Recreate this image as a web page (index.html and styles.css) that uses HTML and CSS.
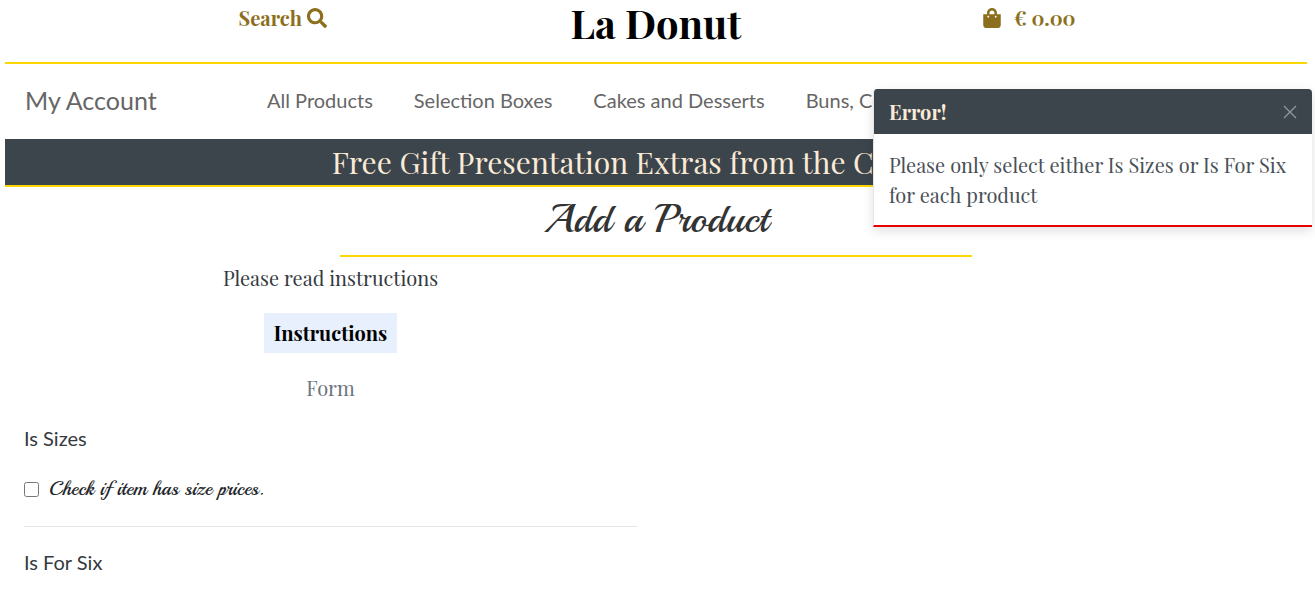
FILE: index.html
```html
<!DOCTYPE html>
<html lang="en">
<head>
<meta charset="utf-8">
<title>La Donut</title>
<link rel="stylesheet" href="styles.css">
</head>
<body>
<header class="topbar">
  <a class="top-link" href="#">Search
    <svg class="icon-search" viewBox="0 0 512 512" aria-hidden="true"><path fill="currentColor" d="M505 442.700 405.300 343c-4.500-4.500-10.600-7-17-7H372c27.600-35.300 44-79.700 44-128C416 93.100 322.900 0 208 0S0 93.100 0 208s93.100 208 208 208c48.300 0 92.700-16.400 128-44v16.300c0 6.400 2.500 12.500 7 17l99.700 99.700c9.400 9.400 24.600 9.400 33.900 0l28.300-28.300c9.400-9.400 9.400-24.600.1-34zM208 336c-70.700 0-128-57.200-128-128 0-70.700 57.200-128 128-128 70.700 0 128 57.200 128 128 0 70.700-57.200 128-128 128z"/></svg></a>
  <a class="logo" href="#">La Donut</a>
  <a class="top-link" href="#"><svg class="icon-bag" viewBox="0 0 448 512" aria-hidden="true"><path fill="currentColor" d="M352 160v-32C352 57.400 294.600 0 224 0S96 57.400 96 128v32H0v272c0 44.200 35.800 80 80 80h288c44.200 0 80-35.800 80-80V160h-96zm-192-32c0-35.300 28.700-64 64-64s64 28.700 64 64v32H160v-32zm160 120c-13.300 0-24-10.700-24-24s10.700-24 24-24 24 10.700 24 24-10.700 24-24 24zm-192 0c-13.300 0-24-10.700-24-24s10.700-24 24-24 24 10.700 24 24-10.700 24-24 24z"/></svg>€ 0.00</a>
</header>
<nav class="nav">
  <a class="account" href="#">My Account</a>
  <div class="nav-links">
    <a href="#">All Products</a>
    <a href="#">Selection Boxes</a>
    <a href="#">Cakes and Desserts</a>
    <a href="#">Buns, Cookies</a>
  </div>
</nav>
<div class="banner">Free Gift Presentation Extras from the Collection</div>
<main>
  <h1 class="title">Add a Product</h1>
  <hr class="title-rule">
  <section class="panel">
    <p class="lead">Please read instructions</p>
    <div class="tabs">
      <button class="tab tab-active" type="button">Instructions</button>
      <button class="tab" type="button">Form</button>
    </div>
    <div class="field">
      <h2 class="field-title">Is Sizes</h2>
      <label class="check" for="is-sizes"><input id="is-sizes" type="checkbox">Check if item has size prices.</label>
    </div>
    <div class="field">
      <h2 class="field-title">Is For Six</h2>
    </div>
  </section>
</main>
<aside class="toast" role="alert">
  <div class="toast-head">
    <strong>Error!</strong>
    <button class="close" type="button" aria-label="Close"><svg viewBox="0 0 14 14" aria-hidden="true"><path d="M1 1l12 12M13 1L1 13" stroke="currentColor" stroke-width="1.300" fill="none"/></svg></button>
  </div>
  <p class="toast-body">Please only select either Is Sizes or Is For Six for each product</p>
</aside>
</body>
</html>
```
FILE: styles.css
```css
* { box-sizing: border-box; }
body {
  margin: 0;
  padding: 0 8px 0 5px;
  background: #fff;
  color: #343a40;
  font-family: "Playfair Display", "Liberation Serif", serif;
  font-size: 20px;
  line-height: 30px;
}
a { color: inherit; text-decoration: none; }
h1, h2, p { margin: 0; font-weight: 400; }
button { border: 0; background: none; font: inherit; color: inherit; }

.topbar {
  display: grid;
  grid-template-columns: repeat(3, 1fr);
  justify-items: center;
  align-items: start;
  height: 64px;
  padding: 3px 7% 0;
  border-bottom: 2px solid #ffd700;
}
.top-link {
  display: flex;
  align-items: center;
  gap: 5px;
  color: #8b6f1c;
  font-weight: 700;
}
.icon-search { width: 20px; height: 20px; }
.icon-bag { width: 18px; height: 20px; margin-right: 8px; }
.logo {
  color: #000;
  font-size: 40px;
  font-weight: 700;
  line-height: 40px;
}

.nav {
  display: flex;
  align-items: center;
  height: 75px;
  padding: 0 0 4px 20px;
  color: #666;
  font-family: Lato, sans-serif;
  overflow: hidden;
  white-space: nowrap;
}
.account { flex: 0 0 242px; font-size: 25px; }
.nav-links { display: flex; gap: 41px; font-size: 20px; }

.banner {
  padding: 3px 0 3px 10px;
  border-bottom: 2px solid #ffd700;
  background: #3c444c;
  color: #faebd7;
  font-size: 30px;
  line-height: 40px;
  text-align: center;
  white-space: nowrap;
}

.title {
  padding: 6px 0 10px;
  color: #333;
  font-family: "Playball", "Liberation Serif", serif;
  font-size: 40px;
  line-height: 52px;
  text-align: center;
}
.title-rule {
  width: 632px;
  max-width: 100%;
  height: 2px;
  margin: 0 auto;
  border: 0;
  background: #ffd700;
}

.panel { width: 50%; padding: 6px 19px 0; }
.lead { text-align: center; }
.tabs {
  display: flex;
  flex-direction: column;
  align-items: center;
  gap: 15px;
  padding: 20px 0 15px;
}
.tab { padding: 5px 10px; color: #6c757d; }
.tab-active { background: #e8f0fe; color: #000; font-weight: 700; }
.field + .field { margin-top: 22px; padding-top: 20px; border-top: 1px solid #e5e5e5; }
.field-title {
  font-family: Lato, sans-serif;
  font-size: 20px;
  line-height: 30px;
}
.check {
  display: flex;
  align-items: center;
  gap: 10px;
  padding-top: 21px;
  color: #212529;
  font-family: "Playball", "Liberation Serif", serif;
  font-size: 20px;
}
.check input { width: 15px; height: 15px; margin: 0; }

.toast {
  position: absolute;
  top: 89px;
  right: 3px;
  width: 439px;
  border: 1px solid rgba(0, 0, 0, .1);
  border-width: 0 0 2px 1px;
  border-bottom-color: #e60000;
  border-radius: 4px 4px 0 0;
  background: #fff;
  box-shadow: 0 4px 12px rgba(0, 0, 0, .12);
  overflow: hidden;
}
.toast-head {
  display: flex;
  justify-content: space-between;
  align-items: center;
  height: 45px;
  padding: 0 15px;
  background: #3c444c;
  color: #faebd7;
}
.close { display: flex; padding: 0; color: #92979b; }
.close svg { width: 14px; height: 14px; }
.toast-body { padding: 16px 15px 15px; color: #495057; }
```
